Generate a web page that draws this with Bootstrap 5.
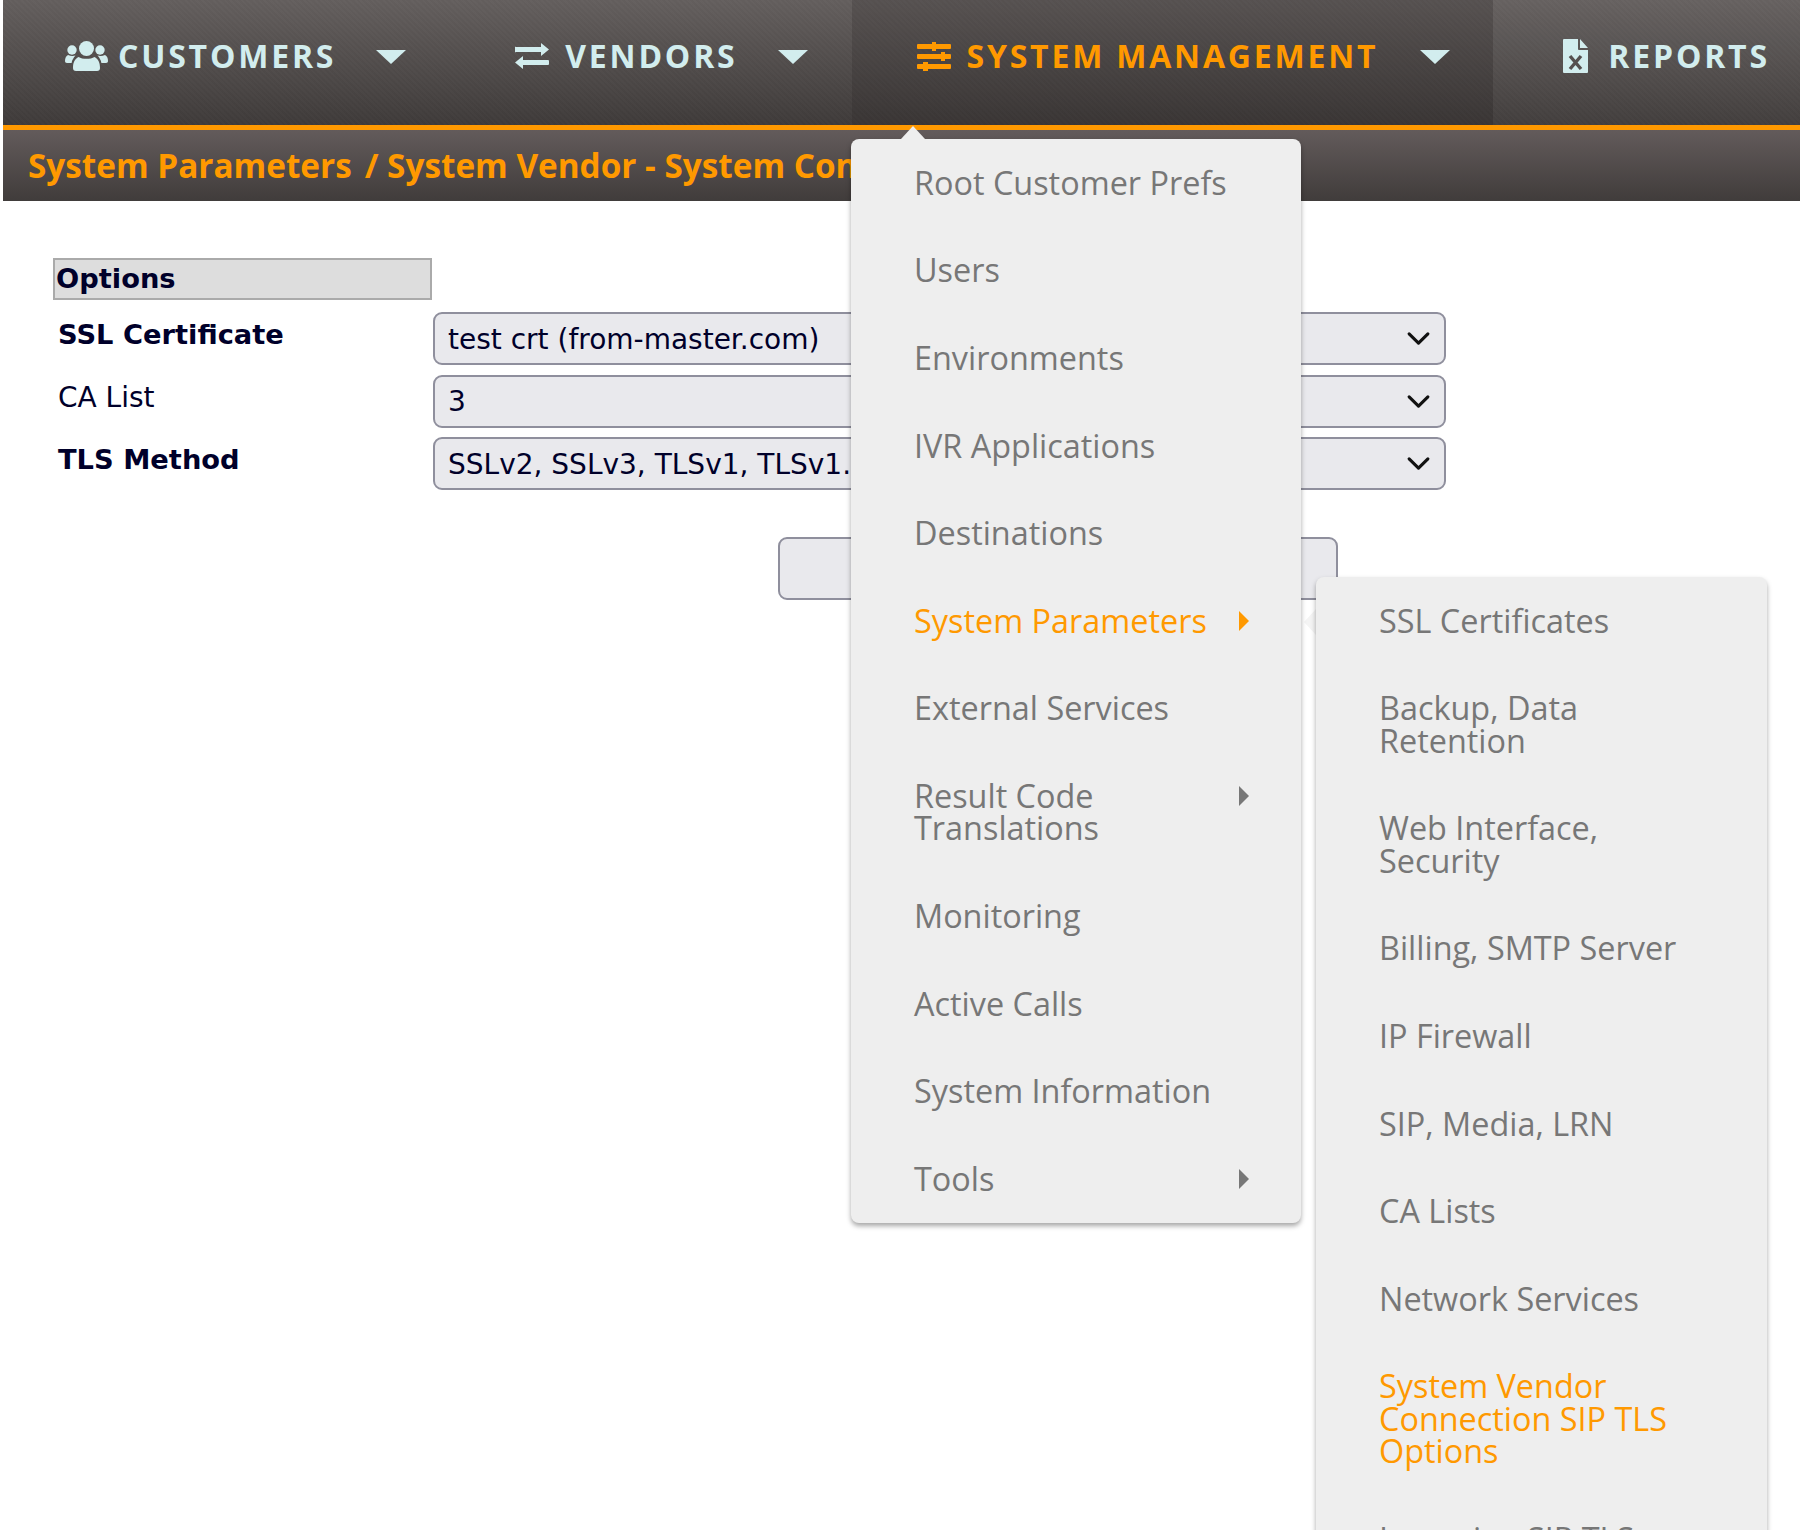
<!DOCTYPE html>
<html lang="en">
<head>
<meta charset="utf-8">
<title>System Vendor - System Connection SIP TLS Options</title>
<link href="https://cdn.jsdelivr.net/npm/bootstrap@5.3.0/dist/css/bootstrap.min.css" rel="stylesheet">
<script src="https://cdn.jsdelivr.net/npm/bootstrap@5.3.0/dist/js/bootstrap.bundle.min.js"></script>
<style>
html,body{height:1530px;overflow:hidden;background:#fff}
.shell{position:relative;height:1530px;overflow:hidden;margin-left:3px;font-family:"Open Sans","Noto Sans",sans-serif}
.edge{position:absolute;left:-3px;top:458px;width:2px;height:137px;background:#ddd}
.topbar{height:130px;border-bottom:5px solid #ff9900;background:repeating-linear-gradient(45deg,rgba(255,255,255,.012) 0 2px,rgba(0,0,0,.012) 2px 4px),linear-gradient(#645f5e,#3f3b3a)}
.topitem{height:125px;display:flex;align-items:center;padding:0 44px 13px 62px;color:#d2edee;font-size:32px;font-weight:700;letter-spacing:2.8px;white-space:nowrap}
.topitem.mid{padding-left:65px}
.topitem.act{color:#ff9900;background:rgba(40,36,35,.22);padding-right:43px}
.topitem.rep{padding-left:70px;padding-right:0;background:rgba(255,255,255,.025);flex:1}
.topitem svg.gl{flex:none;fill:currentColor}
.gapa{margin-right:10px}
.gapb{margin-right:20px}
.tritop{width:0;height:0;border-left:15px solid transparent;border-right:15px solid transparent;border-top:14px solid #d2edee;margin-left:40px;margin-top:2px}
.topitem.act .tritop{margin-left:42px}
.crumb{height:71px;padding-left:25px;display:flex;align-items:center;color:#ff9900;font-size:33.3px;font-weight:700;white-space:pre;background:linear-gradient(#635b5b,#403c3b)}
.crumbsep{margin-left:13px}
.formarea{padding:57px 0 0 50px;width:1443px;font-family:"DejaVu Sans",sans-serif;color:#00002a}
.opthead{width:379px;height:42px;background:#ddd;border:2px solid #aaa;font-size:27.3px;font-weight:700;line-height:37px;padding-left:1px}
.frow{display:flex;align-items:flex-start;height:62.5px}
.opthead + .frow{margin-top:12px}
.flabel{width:380px;padding:4px 0 0 5px;font-size:28px;line-height:38px;flex:none}
.flabel.req{font-weight:700;font-size:27.3px}
.form-select.fsel{width:1013px;height:53px;background-color:#e9e9ed;background-image:url("data:image/svg+xml,%3csvg xmlns='http://www.w3.org/2000/svg' viewBox='0 0 16 16'%3e%3cpath fill='none' stroke='%23111' stroke-linecap='round' stroke-linejoin='round' stroke-width='2' d='m2 5 6 6 6-6'/%3e%3c/svg%3e");background-size:25px 25px;background-position:right 13px center;border:2px solid #8f8f9d;border-radius:9px;font-family:inherit;font-size:28px;color:#00002a;padding:2px 40px 0 13px}
.subbtn{display:block;width:560px;height:63px;margin:37px 0 0 725px;background:#e9e9ed;border:2px solid #8f8f9d;border-radius:9px}
.menupanel{position:absolute;background:#eee;border-radius:8px;box-shadow:0 3px 5px rgba(0,0,0,.35);z-index:5}
.menu-a{left:848px;top:139px;width:450px}
.menu-b{left:1313px;top:577px;width:451px;min-height:1100px}
.menupanel a{display:flex;justify-content:space-between;align-items:flex-start;padding:26.9px 52px 28.3px 63px;font-size:32.4px;line-height:32.4px;color:#777;text-decoration:none}
.menu-b a{padding-right:64px}
.menupanel a.on{color:#ff9900}
.triright{flex:none;width:0;height:0;margin-top:7px;border-top:10px solid transparent;border-bottom:10px solid transparent;border-left:10px solid currentColor}
.beakup{position:absolute;left:898px;top:126px;width:0;height:0;border-left:12px solid transparent;border-right:12px solid transparent;border-bottom:13px solid #eee;z-index:6}
.beakleft{position:absolute;left:1301px;top:609px;width:0;height:0;border-top:13px solid transparent;border-bottom:13px solid transparent;border-right:12px solid #f4f4f4;z-index:4}
</style>
</head>
<body>
<div class="shell">
  <div class="edge"></div>
  <nav class="topbar d-flex">
    <div class="topitem">
      <svg class="gl gapa" width="43" height="30" viewBox="0 0 43 30" aria-hidden="true"><circle cx="21.500" cy="7.500" r="7.500"/><circle cx="7" cy="9" r="4.700"/><circle cx="35" cy="9" r="4.700"/><path d="M8 27c0-6 2-9 5.500-11 2 1.300 5 1.800 8 1.800s6-.5 8-1.800C33 18 35 21 35 27c0 2-1 3-3 3H11c-2 0-3-1-3-3z"/><path d="M0 20c0-3 1-5 3-6 1.500.7 3 1 4.500 1 1 0 2-.2 3-.5-1.800 2-3.500 4.500-3.900 7.500H2c-1.300 0-2-.7-2-2zM43 20c0-3-1-5-3-6-1.500.7-3 1-4.500 1-1 0-2-.2-3-.5 1.800 2 3.500 4.500 3.900 7.500H41c1.300 0 2-.7 2-2z"/></svg>
      <span>CUSTOMERS</span><span class="tritop"></span>
    </div>
    <div class="topitem mid">
      <svg class="gl me-3" width="34" height="26" viewBox="0 0 34 26" aria-hidden="true"><path d="M1 4h25V0l8 6.500-8 6.500V9H1a.5.500 0 0 1-1-.5v-4A.5.500 0 0 1 1 4zM33 17H8v-4l-8 6.500L8 26v-4h25a1 1 0 0 0 1-1v-3a1 1 0 0 0-1-1z"/></svg>
      <span>VENDORS</span><span class="tritop"></span>
    </div>
    <div class="topitem mid act">
      <svg class="gl me-3" width="34" height="29" viewBox="0 0 34 29" aria-hidden="true"><path d="M1 2h14V0h4v2h14a1 1 0 0 1 1 1v3a1 1 0 0 1-1 1H19v2h-4V7H1a1 1 0 0 1-1-1V3a1 1 0 0 1 1-1zM1 12h23v-2h4v2h5a1 1 0 0 1 1 1v3a1 1 0 0 1-1 1h-5v2h-4v-2H1a1 1 0 0 1-1-1v-3a1 1 0 0 1 1-1zM1 22h5v-2h5v2h22a1 1 0 0 1 1 1v3a1 1 0 0 1-1 1H11v2H6v-2H1a1 1 0 0 1-1-1v-3a1 1 0 0 1 1-1z"/></svg>
      <span>SYSTEM MANAGEMENT</span><span class="tritop"></span>
    </div>
    <div class="topitem rep">
      <svg class="gl gapb" width="25" height="34" viewBox="0 0 25 34" aria-hidden="true"><path d="M1 0h14v10a1 1 0 0 0 1 1h9v22a1 1 0 0 1-1 1H1a1 1 0 0 1-1-1V1a1 1 0 0 1 1-1zM17 0l8 9h-8z"/><path d="M7 17l11 13M18 17L7 30" stroke="#55504f" stroke-width="3.400" fill="none"/></svg>
      <span>REPORTS</span>
    </div>
  </nav>
  <div class="crumb"><span>System Parameters</span><span class="crumbsep">/ System Vendor - System Connection SIP TLS Options</span></div>
  <form class="formarea">
    <div class="opthead">Options</div>
    <div class="frow"><label class="flabel req">SSL Certificate</label><select class="form-select fsel"><option>test crt (from-master.com)</option></select></div>
    <div class="frow"><label class="flabel">CA List</label><select class="form-select fsel"><option>3</option></select></div>
    <div class="frow"><label class="flabel req">TLS Method</label><select class="form-select fsel"><option>SSLv2, SSLv3, TLSv1, TLSv1.1, TLSv1.2</option></select></div>
    <button type="button" class="subbtn" aria-label="Save"></button>
  </form>

  <span class="beakup"></span>
  <div class="menupanel menu-a">
    <a href="#">Root Customer Prefs</a>
    <a href="#">Users</a>
    <a href="#">Environments</a>
    <a href="#">IVR Applications</a>
    <a href="#">Destinations</a>
    <a href="#" class="on"><span>System Parameters</span><span class="triright"></span></a>
    <a href="#">External Services</a>
    <a href="#"><span>Result Code<br>Translations</span><span class="triright"></span></a>
    <a href="#">Monitoring</a>
    <a href="#">Active Calls</a>
    <a href="#">System Information</a>
    <a href="#"><span>Tools</span><span class="triright"></span></a>
  </div>
  <span class="beakleft"></span>
  <div class="menupanel menu-b">
    <a href="#">SSL Certificates</a>
    <a href="#"><span>Backup, Data<br>Retention</span></a>
    <a href="#"><span>Web Interface,<br>Security</span></a>
    <a href="#">Billing, SMTP Server</a>
    <a href="#">IP Firewall</a>
    <a href="#">SIP, Media, LRN</a>
    <a href="#">CA Lists</a>
    <a href="#">Network Services</a>
    <a href="#" class="on"><span>System Vendor<br>Connection SIP TLS<br>Options</span></a>
    <a href="#">Incoming SIP TLS</a>
  </div>
</div>
</body>
</html>
